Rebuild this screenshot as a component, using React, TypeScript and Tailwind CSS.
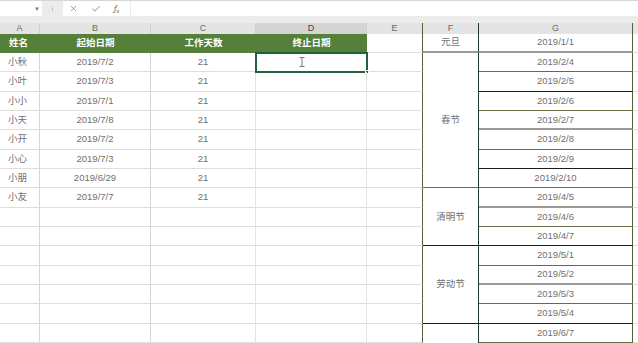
import React from 'react';
import { X, Check } from 'lucide-react';

const font = { fontFamily: '"Liberation Sans", "Noto Sans CJK SC", sans-serif' };

const people = [
  ['小秋', '2019/7/2'],
  ['小叶', '2019/7/3'],
  ['小小', '2019/7/1'],
  ['小天', '2019/7/8'],
  ['小开', '2019/7/2'],
  ['小心', '2019/7/3'],
  ['小朋', '2019/6/29'],
  ['小友', '2019/7/7'],
];

// holiday name + row span, starting row index in the body (0 = header row)
const holidays: Record<number, [string, number, string]> = {
  0: ['元旦', 1, 'border-b-2 border-b-[#9a9a9a]'],
  1: ['春节', 7, 'border-b border-b-[#6b6a45]'],
  8: ['清明节', 3, 'border-b border-b-[#1c1c1c]'],
  11: ['劳动节', 4, 'border-b border-b-[#1c1c1c]'],
  15: ['', 1, ''],
};

const dates = [
  '2019/1/1',
  '2019/2/4', '2019/2/5', '2019/2/6', '2019/2/7', '2019/2/8', '2019/2/9', '2019/2/10',
  '2019/4/5', '2019/4/6', '2019/4/7',
  '2019/5/1', '2019/5/2', '2019/5/3', '2019/5/4',
  '2019/6/7',
];

const O = 'border-b border-b-[#6b6a45]';
const K = 'border-b border-b-[#1c1c1c]';
const G = 'border-b-2 border-b-[#9a9a9a]';
const dateBorders = [G, O, K, O, G, O, K, O, G, O, K, O, G, O, K, O];

const headers = [
  { l: 'A', w: 'w-[40px]', c: 'border-r-[#cfcfcf]' },
  { l: 'B', w: 'w-[111px]', c: 'border-r-[#cfcfcf]' },
  { l: 'C', w: 'w-[105px]', c: 'border-r-[#cfcfcf]' },
  { l: 'D', w: 'w-[111px]', c: 'border-r-[#cfcfcf] bg-[#d4d4d4] text-[#444]' },
  { l: 'E', w: 'w-[56px]', c: 'border-r-[#5d5c3a]' },
  { l: 'F', w: 'w-[56px]', c: 'border-r-[#1e3b2d]' },
  { l: 'G', w: 'w-[154px]', c: 'border-r-[#5d5c3a]' },
];

const txt = 'flex items-center justify-center text-[9.5px] text-[#707070]';

function Toolbar() {
  return (
    <div className="flex h-[16px] bg-[#ececec] border-t border-[#d6d6d6]">
      <div className="w-[42px] bg-white flex items-center justify-end pr-[2px]">
        <span className="text-[6px] text-[#777] leading-none">▼</span>
      </div>
      <div className="w-[21px] flex flex-col items-center justify-center gap-[1px]">
        <span className="w-[1px] h-[1px] bg-[#aaa]" />
        <span className="w-[1px] h-[1px] bg-[#aaa]" />
        <span className="w-[1px] h-[1px] bg-[#aaa]" />
      </div>
      <div className="w-[67px] bg-white flex items-center gap-[13px] pl-[6px] text-[#6a6a6a]">
        <X size={9} strokeWidth={1.6} />
        <Check size={10} strokeWidth={1.8} />
        <span className="font-serif italic text-[9px] leading-none">
          f<sub className="text-[6px]">x</sub>
        </span>
      </div>
      <div className="flex-1 ml-[1px] bg-white" />
    </div>
  );
}

function ColumnHeaders() {
  return (
    <div className="pt-[7px] bg-[#ececec]">
      <div className="flex h-[11px] bg-[#e4e4e4]">
        {headers.map((h) => (
          <div
            key={h.l}
            className={`${h.w} border-r ${h.c} flex items-center justify-center text-[9px] text-[#6a6a6a] leading-none`}
          >
            {h.l}
          </div>
        ))}
        <div className="flex-1" />
      </div>
    </div>
  );
}

export default function App() {
  const rows = Array.from({ length: 16 }, (_, i) => i);
  return (
    <div className="w-[638px] h-[343px] overflow-hidden bg-white" style={font}>
      <Toolbar />
      <ColumnHeaders />
      <div className="grid grid-cols-[40px_111px_105px_111px_56px_56px_154px_1fr] grid-rows-[19px_repeat(15,19.33px)]">
        {rows.map((r) => {
          const p = r >= 1 && r <= 8 ? people[r - 1] : null;
          const hol = holidays[r];
          const grid = 'border-b border-b-[#dedede]';
          return (
            <React.Fragment key={r}>
              {r === 0 ? (
                <>
                  <div className="bg-[#54803a] flex items-center pl-[9px] text-[9.5px] font-bold text-white">姓名</div>
                  <div className="bg-[#54803a] flex items-center justify-center text-[9.5px] font-bold text-white">起始日期</div>
                  <div className="bg-[#54803a] flex items-center justify-center text-[9.5px] font-bold text-white">工作天数</div>
                  <div className="bg-[#54803a] flex items-center justify-center text-[9.5px] font-bold text-white">终止日期</div>
                </>
              ) : (
                <>
                  <div className={`${grid} border-r border-r-[#d6d6d6] flex items-center pl-[8px] text-[9.5px] text-[#707070]`}>
                    {p?.[0]}
                  </div>
                  <div className={`${grid} border-r border-r-[#d6d6d6] ${txt}`}>{p?.[1]}</div>
                  <div className={`${grid} border-r border-r-[#dfe5e1] ${txt}`}>{p ? '21' : ''}</div>
                  <div className={`${grid} border-r border-r-[#dfe5e1] relative`}>
                    {r === 1 && (
                      <>
                        <div className="absolute left-[-1px] top-[-1px] w-[113px] h-[21px] border-2 border-[#23603f]" />
                        <div className="absolute right-[-3px] bottom-[-3px] w-[4px] h-[4px] bg-[#23603f] border border-white" />
                        <svg className="absolute left-[43px] top-[4px]" width="6" height="10" viewBox="0 0 6 10">
                          <path d="M0.5 0.5h5M3 0.5v9M0.5 9.5h5" stroke="#777" strokeWidth="1" fill="none" />
                        </svg>
                      </>
                    )}
                  </div>
                </>
              )}
              <div className={`${grid} border-r border-r-[#5d5c3a]`} />
              {hol && (
                <div
                  className={`border-r border-r-[#1e3b2d] ${hol[2]} ${txt} ${
                    hol[1] === 7 ? 'row-span-7' : hol[1] === 3 ? 'row-span-3' : hol[1] === 4 ? 'row-span-4' : ''
                  }`}
                >
                  {hol[0]}
                </div>
              )}
              <div className={`border-r border-r-[#5d5c3a] ${dateBorders[r]} ${txt}`}>{dates[r]}</div>
              <div className={grid} />
            </React.Fragment>
          );
        })}
      </div>
    </div>
  );
}
